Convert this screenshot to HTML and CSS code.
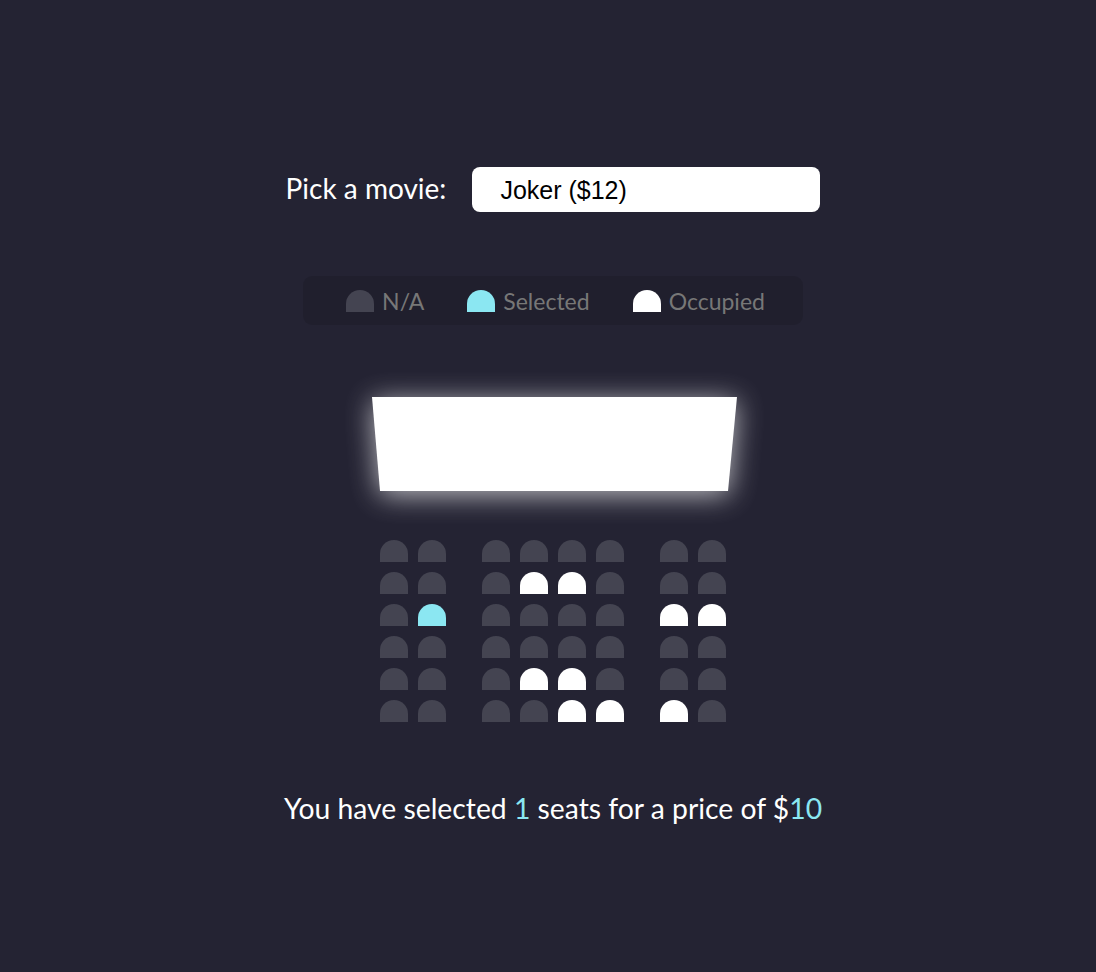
FILE: index.html
```html
<!DOCTYPE html>
<html lang="en">
<head>
<meta charset="UTF-8">
<title>Movie Seat Booking</title>
<link rel="stylesheet" href="styles.css">
</head>
<body>
  <div class="movie-container">
    <label class="movie-label" for="movie">Pick a movie:</label>
    <select id="movie" class="movie-select">
      <option value="12">Joker ($12)</option>
      <option value="10">Avengers: Endgame ($10)</option>
      <option value="8">Toy Story 4 ($8)</option>
      <option value="9">The Lion King ($9)</option>
    </select>
  </div>

  <ul class="showcase">
    <li class="legend-item"><div class="seat"></div><small class="legend-text">N/A</small></li>
    <li class="legend-item"><div class="seat selected"></div><small class="legend-text">Selected</small></li>
    <li class="legend-item"><div class="seat occupied"></div><small class="legend-text">Occupied</small></li>
  </ul>

  <div class="container">
    <div class="screen-wrap"><div class="screen"></div></div>

    <div class="row">
      <div class="seat"></div><div class="seat"></div><div class="seat"></div><div class="seat"></div>
      <div class="seat"></div><div class="seat"></div><div class="seat"></div><div class="seat"></div>
    </div>
    <div class="row">
      <div class="seat"></div><div class="seat"></div><div class="seat"></div><div class="seat occupied"></div>
      <div class="seat occupied"></div><div class="seat"></div><div class="seat"></div><div class="seat"></div>
    </div>
    <div class="row">
      <div class="seat"></div><div class="seat selected"></div><div class="seat"></div><div class="seat"></div>
      <div class="seat"></div><div class="seat"></div><div class="seat occupied"></div><div class="seat occupied"></div>
    </div>
    <div class="row">
      <div class="seat"></div><div class="seat"></div><div class="seat"></div><div class="seat"></div>
      <div class="seat"></div><div class="seat"></div><div class="seat"></div><div class="seat"></div>
    </div>
    <div class="row">
      <div class="seat"></div><div class="seat"></div><div class="seat"></div><div class="seat occupied"></div>
      <div class="seat occupied"></div><div class="seat"></div><div class="seat"></div><div class="seat"></div>
    </div>
    <div class="row">
      <div class="seat"></div><div class="seat"></div><div class="seat"></div><div class="seat"></div>
      <div class="seat occupied"></div><div class="seat occupied"></div><div class="seat occupied"></div><div class="seat"></div>
    </div>
  </div>

  <p class="text">You have selected <span class="count">1</span> seats for a price of $<span class="total">10</span></p>
</body>
</html>
```

FILE: styles.css
```css
* {
  box-sizing: border-box;
}

html,
body {
  height: 100%;
}

body {
  margin: 0;
  padding: 167px 0 0 10px;
  background-color: #242333;
  color: #fff;
  font-family: Lato, "Noto Sans", sans-serif;
  display: flex;
  flex-direction: column;
  align-items: center;
  -webkit-font-smoothing: antialiased;
}

.movie-container {
  display: flex;
  align-items: baseline;
}

.movie-label {
  font-size: 28px;
  margin-right: 26px;
}

.movie-select {
  -webkit-appearance: none;
  -moz-appearance: none;
  appearance: none;
  background-color: #fff;
  color: #000;
  border: 0;
  border-radius: 8px;
  width: 348px;
  height: 45px;
  padding: 0 28px;
  font-family: "Liberation Sans", Arial, sans-serif;
  font-size: 25px;
  outline: none;
}

.showcase {
  list-style: none;
  margin: 64px 0 0;
  padding: 9px 19px 8px;
  display: flex;
  justify-content: space-between;
  background: rgba(0, 0, 0, 0.1);
  border-radius: 9px;
  color: #777;
}

.legend-item {
  display: flex;
  align-items: center;
  margin: 0 19px;
}

.legend-text {
  font-size: 23px;
  margin-left: 3px;
}

.container {
  margin-top: 72px;
  display: flex;
  flex-direction: column;
  align-items: center;
}

.screen-wrap {
  width: 365px;
  margin: 0 -6px 44px -3px;
  filter: drop-shadow(0 4px 14px rgba(255, 255, 255, 0.7));
}

.screen {
  height: 94px;
  background-color: #fff;
  clip-path: polygon(0 0, 100% 0, calc(100% - 9px) 100%, 8px 100%);
}

.row {
  display: flex;
}

.seat {
  width: 28px;
  height: 22px;
  margin: 5px;
  background-color: #444451;
  border-radius: 14px 14px 0 0;
}

.seat.selected {
  background-color: #8be7f2;
}

.seat.occupied {
  background-color: #fff;
}

.row .seat:nth-of-type(2) {
  margin-right: 31px;
}

.row .seat:nth-last-of-type(2) {
  margin-left: 31px;
}

.text {
  margin: 64px 0 0;
  font-size: 28.3px;
}

.text .count,
.text .total {
  color: #8be7f2;
}
```
